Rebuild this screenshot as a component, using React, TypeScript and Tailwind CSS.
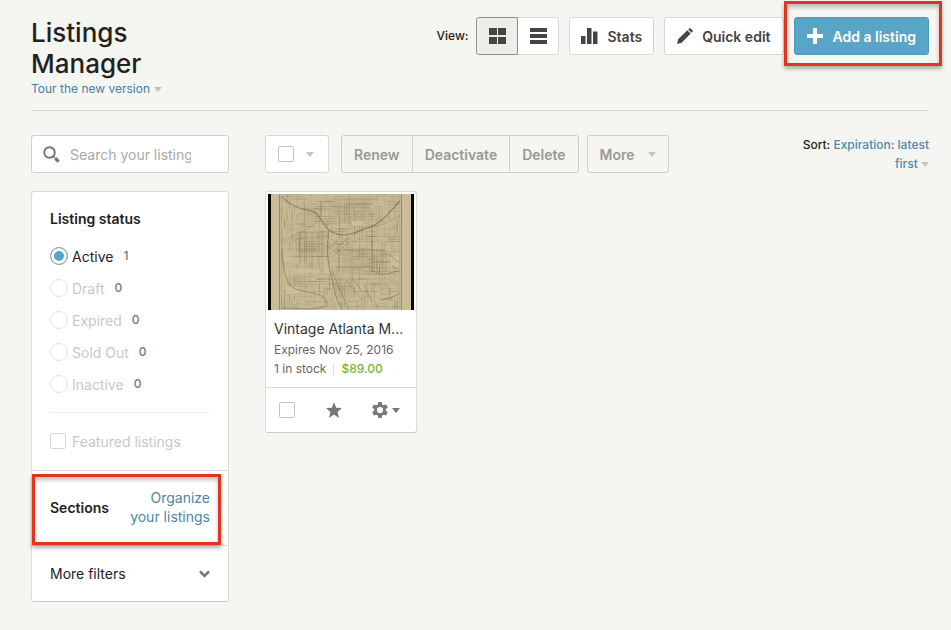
import { useState } from 'react'
import clsx from 'clsx'

const statuses = [
  { id: 'active', label: 'Active', count: 1 },
  { id: 'draft', label: 'Draft', count: 0 },
  { id: 'expired', label: 'Expired', count: 0 },
  { id: 'sold-out', label: 'Sold Out', count: 0 },
  { id: 'inactive', label: 'Inactive', count: 0 },
]

const bulkActions = ['Renew', 'Deactivate', 'Delete']

function Caret({ className }: { className?: string }) {
  return (
    <svg viewBox="0 0 8 5" className={clsx('inline-block h-[5px] w-2', className)} fill="currentColor" aria-hidden="true">
      <path d="M0 0h8L4 5z" />
    </svg>
  )
}

// Small deterministic generator so the street grid is the same on every render
function createRandom(seed: number) {
  let s = seed
  return () => {
    s = (s * 16807) % 2147483647
    return s / 2147483647
  }
}

function buildStreets() {
  const rand = createRandom(1892)
  const streets: { d: string; o: number }[] = []
  for (let i = 0; i < 620; i++) {
    const x = 14 + Math.floor(rand() * 47) * 2.5
    const y = Math.floor(rand() * 46) * 2.5
    const len = 4 + rand() * 16
    const o = 0.12 + rand() * 0.26
    if (rand() > 0.5) {
      streets.push({ d: `M${x} ${y}H${Math.min(131, x + len).toFixed(1)}`, o })
    } else {
      streets.push({ d: `M${x} ${y}V${Math.min(115, y + len).toFixed(1)}`, o })
    }
  }
  return streets
}

const streets = buildStreets()

function MapThumbnail() {
  return (
    <svg viewBox="0 0 146 116" className="block w-full" role="img" aria-label="Vintage Atlanta map">
      <rect width="146" height="116" fill="#050403" />
      <rect x="3" width="140" height="116" fill="#cabc96" />
      <rect x="11" width="123" height="116" fill="#c5b995" />
      <path d="M11.500 0V116M133.500 0V116" stroke="#988c6d" strokeWidth="1" />
      <path d="M13.500 0V116M131.500 0V116" stroke="#a99d7c" strokeWidth="0.500" />
      <g fill="#9c8f6c" opacity="0.16">
        <path d="M27 38h30v25H27zM60 4h42v26H60zM74 58h30v22H74zM36 12h18v16H36zM20 82h18v14H20zM66 84h20v20H66z" />
      </g>
      <g stroke="#73684c" strokeWidth="0.600" fill="none">
        {streets.map((s, i) => (
          <path key={i} d={s.d} opacity={s.o} />
        ))}
      </g>
      <g fill="#c9be9b">
        <path d="M26 75h26v4H26zM56 72h6v8H56zM84 27h11v5H84zM18 93h14v7H18zM122 62h9v10h-9zM16 60h5v8h-5z" />
      </g>
      <g stroke="#756a4c" strokeWidth="0.500" fill="none" opacity="0.55">
        <path d="M60 43l18 13M58 47l18 14M59 52l14 10M62 60l16-14M60 56l14-14M64 63l16-15" />
        <path d="M106 55v23M109 55v23M112 55v24M115 55v24M118 56v22M103 62h20M103 68h20M103 74h20" />
        <path d="M28 38h28M28 44h28M28 50h28M28 56h28M32 38v32M38 38v32M44 38v32M50 38v32M69 13h33M36 8v20" />
      </g>
      <g stroke="#665b41" strokeWidth="0.700" fill="none" opacity="0.6">
        <path d="M69 56h48M69 73h34M104 30v48M71 53v25M53 8v14" />
      </g>
      <g stroke="#786d52" fill="none" strokeLinecap="round">
        <path d="M14 3c8 9 18 12 29 14c11 2 9 14 21 21c15 8 28-3 38-5c12-4 17-13 30-26" strokeWidth="1.100" opacity="0.75" />
        <path d="M14 46c16-3 28-15 36-18" strokeWidth="0.600" opacity="0.5" />
        <path d="M61 36c-2 14-2 28 1 42c5 14 3 24 12 37" strokeWidth="1" opacity="0.7" />
        <path d="M64 76c4 11 9 24 17 39" strokeWidth="0.800" opacity="0.6" />
        <path d="M14 55c1 20 3 36 14 40s20 3 27 8c6 6 4 10-4 11c-12 2-24 0-37 0" strokeWidth="0.900" opacity="0.65" />
        <path d="M70 52c14-10 20-16 38-20s16-9 24-10" strokeWidth="0.700" opacity="0.5" />
        <path d="M103 76c6 3 10 5 14 4c5 0 8-3 15-3M122 60c3 5 6 7 9 8M124 72c3 3 4 3 6 2M114 106c6-2 12-3 17-6" strokeWidth="0.800" opacity="0.75" />
        <path d="M78 86l16 20M84 84l9 12M96 90l8 18" strokeWidth="0.800" opacity="0.55" />
      </g>
    </svg>
  )
}

function Header() {
  const [view, setView] = useState('grid')

  return (
    <header className="flex items-start justify-between border-b border-[#d9d9d5] pb-[11px]">
      <div className="w-[198px]">
        <h1 className="text-[26px] font-medium leading-[31px] text-[#222]">Listings Manager</h1>
        <a href="#tour" className="flex items-center text-[12px] leading-5 text-[#4282a8]">
          Tour the new version
          <Caret className="ml-1 text-[#c4c4c0]" />
        </a>
      </div>

      <div className="flex items-center gap-[10px] text-[14px] font-semibold text-[#444]">
        <div className="flex items-center">
          <span className="mr-2 text-[12px] font-medium text-[#222]">View:</span>
          <button
            type="button"
            aria-label="Grid view"
            onClick={() => setView('grid')}
            className={clsx(
              'flex h-[38px] w-[42px] items-center justify-center rounded-l-[3px] border',
              view === 'grid' ? 'border-[#90908a] bg-[#eeeee9]' : 'border-[#d6d6d2] bg-white'
            )}
          >
            <svg viewBox="0 0 17 16" className="h-4 w-[17px]" fill="#444">
              <path d="M0 0h8v7H0zM9 0h8v7H9zM0 9h8v7H0zM9 9h8v7H9z" />
            </svg>
          </button>
          <button
            type="button"
            aria-label="List view"
            onClick={() => setView('list')}
            className={clsx(
              'flex h-[38px] w-[41px] items-center justify-center rounded-r-[3px] border border-l-0',
              view === 'list' ? 'border-[#90908a] bg-[#eeeee9]' : 'border-[#d6d6d2] bg-white'
            )}
          >
            <svg viewBox="0 0 17 16" className="h-4 w-[17px]" fill="#444">
              <path d="M0 0h17v4H0zM0 6h17v4H0zM0 12h17v4H0z" />
            </svg>
          </button>
        </div>

        <button type="button" className="flex h-[38px] items-center gap-[9px] rounded-[3px] border border-[#d6d6d2] bg-white px-[11px]">
          <svg viewBox="0 0 17 16" className="h-4 w-[17px]" fill="#444">
            <path d="M0 8h4.500v8H0zM6 0h4.500v16H6zM12 3.500h4.500V16H12z" />
          </svg>
          Stats
        </button>

        <button type="button" className="flex h-[38px] items-center gap-[9px] rounded-[3px] border border-[#d6d6d2] bg-white px-3">
          <svg viewBox="0 0 16 16" className="size-4" fill="#444">
            <path d="M0 16L1.200 11.300L10.300 2.200L13.700 5.600L4.600 14.700ZM11.200 1.400L12.100 0.500Q12.800-.2 13.600 0.500L15.500 2.300Q16.200 3.100 15.500 3.800L14.600 4.700Z" />
          </svg>
          Quick edit
        </button>

        <div className="relative">
          <button type="button" className="flex h-[38px] items-center gap-[10px] rounded-[3px] border border-[#4b9abb] bg-[#59a5c7] px-3 text-white">
            <svg viewBox="0 0 16 16" className="size-4" fill="currentColor">
              <path d="M6 0h4v6h6v4h-6v6H6v-6H0V6h6z" />
            </svg>
            Add a listing
          </button>
          <div className="pointer-events-none absolute -bottom-[11px] -left-[10px] -right-[13px] -top-4 border-3 border-[#e2341a] shadow-[0_3px_4px_rgba(0,0,0,0.3),inset_0_3px_4px_rgba(0,0,0,0.25)]" />
        </div>
      </div>
    </header>
  )
}

function Toolbar() {
  return (
    <div className="flex items-start justify-between">
      <div className="flex text-[14px] font-semibold text-[#999994]">
        <div className="flex h-[38px] w-16 items-center gap-3 rounded-[3px] border border-[#d6d6d2] bg-white pl-3">
          <input
            type="checkbox"
            aria-label="Select all listings"
            className="size-4 appearance-none rounded-[2px] border border-[#c4c4c0] bg-white checked:bg-[#59a5c7]"
          />
          <button type="button" aria-label="Selection options" className="flex items-center text-[#c4c4c0]">
            <Caret />
          </button>
        </div>

        <div className="ml-3 flex h-[38px] divide-x divide-[#cfcfcb] rounded-[3px] border border-[#cfcfcb]">
          {bulkActions.map((action) => (
            <button key={action} type="button" disabled className="px-3">
              {action}
            </button>
          ))}
        </div>

        <button type="button" disabled className="ml-2 flex h-[38px] items-center gap-[13px] rounded-[3px] border border-[#cfcfcb] px-3">
          More
          <Caret className="text-[#c4c4c0]" />
        </button>
      </div>

      <div className="w-[132px] text-right text-[12px] font-medium leading-[19px] text-[#222]">
        Sort:{' '}
        <a href="#sort" className="text-[#4b8bb0]">
          Expiration: latest first <Caret className="align-middle text-[#c4c4c0]" />
        </a>
      </div>
    </div>
  )
}

function Sidebar() {
  const [status, setStatus] = useState('active')

  return (
    <aside className="w-[198px] shrink-0">
      <div className="flex h-[38px] items-center rounded-[3px] border border-[#d0d0cc] bg-white pl-[11px]">
        <svg viewBox="0 0 17 17" className="size-[17px] shrink-0" fill="none" stroke="#777">
          <circle cx="6.500" cy="6.500" r="5.300" strokeWidth="1.900" />
          <path d="M10.300 10.300l1.500 1.500" strokeWidth="1.500" />
          <path d="M12.200 12.200l3.400 3.400" strokeWidth="3.200" />
        </svg>
        <input
          type="text"
          aria-label="Search your listings"
          placeholder="Search your listings"
          className="ml-[10px] w-[121px] bg-transparent text-[14px] outline-none placeholder:text-[#a9a9a9]"
        />
      </div>

      <div className="mt-[18px] rounded-[3px] border border-[#dcdcd8] border-b-[#cbcbc7] bg-white text-[14px] text-[#222]">
        <div className="px-[18px] pb-[19px] pt-[17px]">
          <h2 className="font-semibold leading-5">Listing status</h2>
          <div className="mt-[11px]">
            {statuses.map((s) => (
              <div key={s.id} className="flex h-8 items-center">
                <input
                  id={s.id}
                  type="radio"
                  name="status"
                  checked={status === s.id}
                  disabled={s.count === 0}
                  onChange={() => setStatus(s.id)}
                  className="size-[18px] appearance-none rounded-full border border-[#999] bg-white checked:bg-[#59a5c7] checked:shadow-[inset_0_0_0_3px_#fff] disabled:border-[#e2e2df]"
                />
                <label htmlFor={s.id} className={clsx('ml-1', s.count === 0 && 'text-[#c8c8c5]')}>
                  {s.label}
                </label>
                <span className="ml-[10px] text-[12px] font-medium text-[#777]">{s.count}</span>
              </div>
            ))}
          </div>
          <hr className="mt-3 border-[#efefed]" />
          <div className="mt-[18px] flex h-5 items-center">
            <input
              id="featured"
              type="checkbox"
              disabled
              className="size-4 appearance-none rounded-[2px] border border-[#d8d8d5] bg-white"
            />
            <label htmlFor="featured" className="ml-[6px] text-[#c8c8c5]">
              Featured listings
            </label>
          </div>
        </div>

        <div className="relative flex items-center justify-between border-t border-[#dcdcd8] px-[18px] pb-[19px] pt-[17px]">
          <h2 className="font-semibold">Sections</h2>
          <a href="#sections" className="w-[90px] text-right leading-[19px] text-[#4b86a8]">
            Organize your listings
          </a>
          <div className="pointer-events-none absolute bottom-0 left-0 right-[7px] top-[3px] border-3 border-[#e2341a] shadow-[0_3px_4px_rgba(0,0,0,0.3),inset_0_3px_4px_rgba(0,0,0,0.25)]" />
        </div>

        <button type="button" className="flex h-14 w-full items-center justify-between border-t border-[#dcdcd8] px-[18px]">
          More filters
          <svg viewBox="0 0 11 8" className="h-2 w-[11px]" fill="none" stroke="#777" strokeWidth="2.600">
            <path d="M1 1.300l4.500 4.500L10 1.300" />
          </svg>
        </button>
      </div>
    </aside>
  )
}

function ListingCard() {
  return (
    <article className="w-[152px] rounded-[3px] border border-[#dcdcd8] border-b-[#cbcbc7] bg-white">
      <div className="px-[2px] pt-[2px]">
        <MapThumbnail />
      </div>
      <div className="px-2 pb-[9px] pt-[9px] text-[12px] leading-[19px] text-[#666]">
        <h3 className="truncate text-[14px] leading-5 text-[#333]">Vintage Atlanta M...</h3>
        <p className="mt-px">Expires Nov 25, 2016</p>
        <p className="flex items-center">
          1 in stock
          <span className="mx-[7px] h-3 w-px bg-[#ddd]" />
          <span className="font-medium text-[#7ab62c]">$89.00</span>
        </p>
      </div>
      <div className="flex h-[45px] items-center justify-between border-t border-[#dcdcd8] pl-[13px] pr-4">
        <input
          type="checkbox"
          aria-label="Select Vintage Atlanta Map"
          className="size-4 appearance-none rounded-[2px] border border-[#c4c4c0] bg-white checked:bg-[#59a5c7]"
        />
        <button type="button" aria-label="Feature listing">
          <svg viewBox="0 0 16 16" className="size-4" fill="#777">
            <path d="M8 0l2.200 5.700 5.800.4-4.500 3.800 1.500 6.100L8 12.600 3 16l1.500-6.100L0 6.100l5.800-.4z" />
          </svg>
        </button>
        <button type="button" aria-label="Listing options" className="flex items-center gap-1 text-[#777]">
          <svg viewBox="0 0 16 16" className="size-4">
            <g fill="#777">
              <circle cx="8" cy="8" r="5.900" />
              <path d="M6.300 0h3.400l.6 3H5.700zM6.300 16h3.400l.6-3H5.700z" />
              <path d="M6.300 0h3.400l.6 3H5.700zM6.300 16h3.400l.6-3H5.700z" transform="rotate(60 8 8)" />
              <path d="M6.300 0h3.400l.6 3H5.700zM6.300 16h3.400l.6-3H5.700z" transform="rotate(120 8 8)" />
            </g>
            <circle cx="8" cy="8" r="3.100" fill="#fff" />
          </svg>
          <Caret />
        </button>
      </div>
    </article>
  )
}

export default function App() {
  return (
    <div className="min-h-screen bg-[#f5f5f1] pb-7 pl-[31px] pr-[22px] pt-[17px] font-['Inter','Liberation_Sans',sans-serif]">
      <Header />
      <div className="mt-6 flex gap-9">
        <Sidebar />
        <main className="min-w-0 flex-1">
          <Toolbar />
          <div className="mt-[18px] flex flex-wrap gap-4">
            <ListingCard />
          </div>
        </main>
      </div>
    </div>
  )
}
